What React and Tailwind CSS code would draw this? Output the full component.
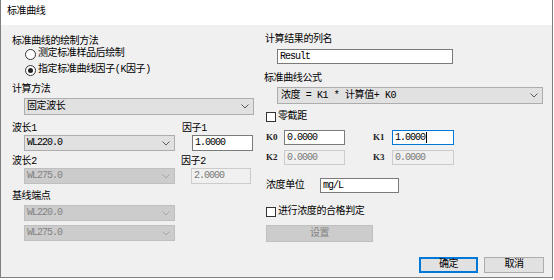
import React from "react";

const MONO = "font-['Liberation_Mono',monospace] tracking-[-1px]";

const Chevron = ({ disabled }) => (
  <svg width="8" height="5" viewBox="0 0 8 5" className="shrink-0">
    <path
      d="M0.5 0.5 L4 4 L7.5 0.5"
      fill="none"
      stroke={disabled ? "#a6a6a6" : "#5a5a5a"}
      strokeWidth="1"
    />
  </svg>
);

const Combo = ({ value, disabled, mono, className = "" }) => (
  <div
    className={`flex items-center justify-between border pl-[2px] pr-[4px] ${
      disabled
        ? "bg-[#cccccc] border-[#bfbfbf] text-[#838383]"
        : "bg-[#e1e1e1] border-[#adadad] text-black"
    } ${className}`}
  >
    <span className={mono ? MONO : ""}>{value}</span>
    <Chevron disabled={disabled} />
  </div>
);

const TextBox = ({ value, disabled, focused, caret, className = "" }) => (
  <div
    className={`flex items-center border pl-[2px] ${
      disabled
        ? "bg-[#f0f0f0] border-[#cccccc] text-[#7a7a7a]"
        : focused
        ? "bg-white border-[#0078d7] text-black"
        : "bg-white border-[#7a7a7a] text-black"
    } ${className}`}
  >
    <span className={MONO}>{value}</span>
    {caret && <span className="w-px h-[11px] bg-black ml-px" />}
  </div>
);

const Radio = ({ checked, label }) => (
  <div className="flex items-center h-[12px] pl-[13px] gap-[2px]">
    <div className="w-[11px] h-[11px] rounded-full border border-[#333333] bg-white flex items-center justify-center">
      {checked && <div className="w-[5px] h-[5px] rounded-full bg-[#222222]" />}
    </div>
    <span>{label}</span>
  </div>
);

const Check = ({ label }) => (
  <div className="flex items-center gap-[2px]">
    <div className="w-[10px] h-[10px] border border-[#333333] bg-white" />
    <span>{label}</span>
  </div>
);

const KLabel = ({ children }) => (
  <span className="font-['Liberation_Serif',serif] font-bold text-[9px] tracking-normal text-[#222222]">
    {children}
  </span>
);

export default function App() {
  return (
    <div className="w-[554px] h-[280px] bg-white text-[10px] leading-none text-black tracking-[-0.4px] font-['Liberation_Mono','Noto_Sans_CJK_SC',monospace]">
      <div className="w-[553px] h-[278px] border-x border-b border-[#7f7f7f] flex flex-col">
        <div className="h-[25px] bg-white flex items-center pl-[6px] pb-px">标准曲线</div>

        <div className="flex-1 bg-[#f0f0f0] flex">
          {/* left column */}
          <div className="w-[263px] pl-[11px] flex flex-col">
            <div className="mt-[11px] h-[12px] flex items-center">标准曲线的绘制方法</div>
            <Radio label="测定标准样品后绘制" />
            <div className="mt-[4px]">
              <Radio checked label="指定标准曲线因子(K因子)" />
            </div>

            <div className="mt-[8px] h-[12px] flex items-center">计算方法</div>
            <Combo value="固定波长" className="mt-[2px] h-[17px] ml-[12px] w-[230px]" />

            <div className="mt-[8px] h-[12px] flex items-center">
              <span className="w-[170px]">波长1</span>
              <span>因子1</span>
            </div>
            <div className="h-[16px] flex">
              <Combo value="WL220.0" mono className="ml-[12px] w-[151px]" />
              <TextBox value="1.0000" className="ml-[17px] w-[61px]" />
            </div>

            <div className="mt-[5px] h-[12px] flex items-center">
              <span className="w-[169px]">波长2</span>
              <span>因子2</span>
            </div>
            <div className="h-[16px] flex">
              <Combo value="WL275.0" mono disabled className="ml-[12px] w-[151px]" />
              <TextBox value="2.0000" disabled className="ml-[16px] w-[60px]" />
            </div>

            <div className="mt-[7px] h-[12px] flex items-center">基线端点</div>
            <Combo value="WL220.0" mono disabled className="mt-[2px] h-[16px] ml-[12px] w-[151px]" />
            <Combo value="WL275.0" mono disabled className="mt-[4px] h-[16px] ml-[12px] w-[151px]" />
          </div>

          {/* right column */}
          <div className="flex-1 flex flex-col">
            <div className="mt-[9px] h-[12px] flex items-center pl-px">计算结果的列名</div>
            <TextBox value="Result" className="mt-[3px] h-[15px] ml-[13px] w-[176px] pl-0" />

            <div className="mt-[9px] h-[12px] flex items-center">标准曲线公式</div>
            <Combo
              value="浓度 = K1 * 计算值+ K0"
              className="mt-[2px] h-[17px] ml-[13px] w-[266px] pl-[3px]"
            />

            <div className="mt-[7px] h-[12px] flex items-center pl-[2px]">
              <Check label="零截距" />
            </div>

            <div className="mt-[7px] h-[15px] flex items-center pl-[2px]">
              <span className="w-[18px]">
                <KLabel>K0</KLabel>
              </span>
              <TextBox value="0.0000" className="h-full w-[61px]" />
              <span className="ml-[28px] w-[19px]">
                <KLabel>K1</KLabel>
              </span>
              <TextBox value="1.0000" focused caret className="h-full w-[62px]" />
            </div>

            <div className="mt-[5px] h-[15px] flex items-center pl-[2px]">
              <span className="w-[18px]">
                <KLabel>K2</KLabel>
              </span>
              <TextBox value="0.0000" disabled className="h-full w-[61px]" />
              <span className="ml-[28px] w-[19px]">
                <KLabel>K3</KLabel>
              </span>
              <TextBox value="0.0000" disabled className="h-full w-[62px]" />
            </div>

            <div className="mt-[13px] h-[15px] flex items-center pl-[2px]">
              <span className="w-[54px]">浓度单位</span>
              <TextBox value="mg/L" className="h-full w-[79px]" />
            </div>

            <div className="mt-[13px] h-[12px] flex items-center pl-[2px]">
              <Check label="进行浓度的合格判定" />
            </div>

            <div className="mt-[7px] ml-[2px] h-[17px] w-[107px] bg-[#cccccc] border border-[#bfbfbf] text-[#838383] flex items-center justify-center">
              设置
            </div>

            <div className="mt-[15px] h-[16px] flex pl-[155px] gap-[6px]">
              <div className="w-[59px] h-full bg-[#e1e1e1] border-2 border-[#0078d7] flex items-center justify-center">
                确定
              </div>
              <div className="w-[60px] h-full bg-[#e1e1e1] border border-[#adadad] flex items-center justify-center">
                取消
              </div>
            </div>
          </div>
        </div>
      </div>
    </div>
  );
}
